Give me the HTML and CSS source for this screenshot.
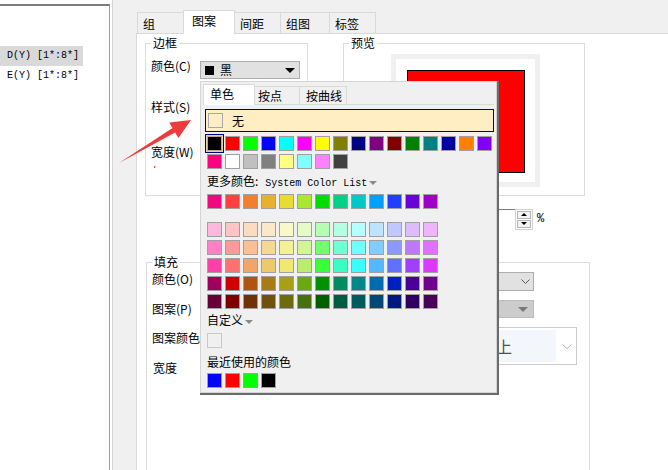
FILE: index.html
```html
<!DOCTYPE html>
<html lang="zh">
<head>
<meta charset="utf-8">
<link rel="stylesheet" href="styles.css">
</head>
<body>
<div class="app">
  <aside class="left">
    <div class="list">
      <div class="item sel">D(Y) [1*:8*]</div>
      <div class="item">E(Y) [1*:8*]</div>
    </div>
  </aside>
  <main class="main">
    <div class="tabs">
      <div class="tab t1">组</div>
      <div class="tab t2 active">图案</div>
      <div class="tab t3">间距</div>
      <div class="tab t4">组图</div>
      <div class="tab t5">标签</div>
    </div>
    <div class="panel">
      <div class="toprow">
        <div class="group border-group">
          <div class="legend">边框</div>
          <div class="row r1">
            <span class="lbl">颜色(C)</span>
            <div class="combo color-combo"><span class="sq"></span><span class="cname">黑</span><span class="tri"></span></div>
          </div>
          <div class="lbl-line r2">样式(S)</div>
          <div class="lbl-line r3">宽度(W)</div>
          <div class="dot"></div>
        </div>
        <div class="group preview-group">
          <div class="legend">预览</div>
          <div class="frame"><div class="redbox"></div></div>
        </div>
      </div>
      <div class="spinrow">
        <div class="spin-input"></div>
        <div class="spin-btns"><span class="sb"><span class="up"></span></span><span class="sb"><span class="down"></span></span></div>
        <span class="pct">%</span>
      </div>
      <div class="group fill-group">
        <div class="legend">填充</div>
        <div class="frow f1">
          <span class="lbl fl1">颜色(O)</span>
          <div class="combo fcombo1"><svg width="9" height="5" viewBox="0 0 9 5"><polyline points="0.5,0.5 4.5,4.5 8.5,0.5" fill="none" stroke="#555" stroke-width="1"/></svg></div>
        </div>
        <div class="frow f2">
          <span class="lbl fl2">图案(P)</span>
          <div class="combo fcombo2"><span class="gtri"></span></div>
        </div>
        <div class="frow f3">
          <div class="lblcol">
            <span class="lbl fl3">图案颜色</span>
            <span class="lbl fl4">宽度</span>
          </div>
          <div class="fcombo3">
            <div class="fc3-inner"><span class="fc3-text">向上</span></div>
            <svg width="10" height="5" viewBox="0 0 10 5"><polyline points="0.5,0.5 5,4.5 9.5,0.5" fill="none" stroke="#b0b0b0" stroke-width="1"/></svg>
          </div>
        </div>
      </div>
    </div>
  </main>
</div>

<div class="popup">
  <div class="ptabs">
    <div class="ptab p1 active">单色</div>
    <div class="ptab p2">按点</div>
    <div class="ptab p3">按曲线</div>
  </div>
  <div class="none-row"><span class="none-sq"></span><span class="none-txt">无</span></div>
  <div class="sw-grid basic">
    <span class="sw selected" style="background:#000000"></span>
    <span class="sw" style="background:#ff0000"></span>
    <span class="sw" style="background:#00ff00"></span>
    <span class="sw" style="background:#0000ff"></span>
    <span class="sw" style="background:#00ffff"></span>
    <span class="sw" style="background:#ff00ff"></span>
    <span class="sw" style="background:#ffff00"></span>
    <span class="sw" style="background:#808000"></span>
    <span class="sw" style="background:#000080"></span>
    <span class="sw" style="background:#800080"></span>
    <span class="sw" style="background:#800000"></span>
    <span class="sw" style="background:#008000"></span>
    <span class="sw" style="background:#008080"></span>
    <span class="sw" style="background:#0000a0"></span>
    <span class="sw" style="background:#ff8000"></span>
    <span class="sw" style="background:#8000ff"></span>
    <span class="sw" style="background:#ff0080"></span>
    <span class="sw" style="background:#ffffff"></span>
    <span class="sw" style="background:#c0c0c0"></span>
    <span class="sw" style="background:#808080"></span>
    <span class="sw" style="background:#ffff80"></span>
    <span class="sw" style="background:#80ffff"></span>
    <span class="sw" style="background:#ff80ff"></span>
    <span class="sw" style="background:#404040"></span>
  </div>
  <div class="ptext more-title">更多颜色:<span class="mono">System Color List</span><span class="dd"></span></div>
  <div class="sw-grid more">
    <span class="sw" style="background:#f0087e"></span>
    <span class="sw" style="background:#ff4040"></span>
    <span class="sw" style="background:#f08030"></span>
    <span class="sw" style="background:#e8b030"></span>
    <span class="sw" style="background:#e8dc30"></span>
    <span class="sw" style="background:#a8e830"></span>
    <span class="sw" style="background:#00dc00"></span>
    <span class="sw" style="background:#00d088"></span>
    <span class="sw" style="background:#00c8c8"></span>
    <span class="sw" style="background:#00a0ff"></span>
    <span class="sw" style="background:#2040ff"></span>
    <span class="sw" style="background:#6a00dc"></span>
    <span class="sw" style="background:#a000c8"></span>
  </div>
  <div class="sw-grid palette">
    <span class="sw" style="background:#ffb8dc"></span>
    <span class="sw" style="background:#ffc4c4"></span>
    <span class="sw" style="background:#fcdcc0"></span>
    <span class="sw" style="background:#fae8c8"></span>
    <span class="sw" style="background:#f8f8c8"></span>
    <span class="sw" style="background:#e4fac8"></span>
    <span class="sw" style="background:#b4ffb4"></span>
    <span class="sw" style="background:#b4ffe4"></span>
    <span class="sw" style="background:#b4ffff"></span>
    <span class="sw" style="background:#bce4ff"></span>
    <span class="sw" style="background:#c0c8ff"></span>
    <span class="sw" style="background:#dcbcff"></span>
    <span class="sw" style="background:#f0b4ff"></span>

    <span class="sw" style="background:#ff80c4"></span>
    <span class="sw" style="background:#ff9898"></span>
    <span class="sw" style="background:#f8c094"></span>
    <span class="sw" style="background:#f4d898"></span>
    <span class="sw" style="background:#f4f098"></span>
    <span class="sw" style="background:#d4f498"></span>
    <span class="sw" style="background:#70ff70"></span>
    <span class="sw" style="background:#70ffd4"></span>
    <span class="sw" style="background:#70ffff"></span>
    <span class="sw" style="background:#84ccff"></span>
    <span class="sw" style="background:#8c98ff"></span>
    <span class="sw" style="background:#bc78ff"></span>
    <span class="sw" style="background:#e070ff"></span>

    <span class="sw" style="background:#ff40a8"></span>
    <span class="sw" style="background:#ff7070"></span>
    <span class="sw" style="background:#f4a464"></span>
    <span class="sw" style="background:#eec86c"></span>
    <span class="sw" style="background:#f0e870"></span>
    <span class="sw" style="background:#bcec6c"></span>
    <span class="sw" style="background:#38ff38"></span>
    <span class="sw" style="background:#38ffc4"></span>
    <span class="sw" style="background:#38ffff"></span>
    <span class="sw" style="background:#54b8ff"></span>
    <span class="sw" style="background:#6070ff"></span>
    <span class="sw" style="background:#a040ff"></span>
    <span class="sw" style="background:#dc38ff"></span>

    <span class="sw" style="background:#a0005c"></span>
    <span class="sw" style="background:#d00000"></span>
    <span class="sw" style="background:#b05410"></span>
    <span class="sw" style="background:#a87c14"></span>
    <span class="sw" style="background:#a8a014"></span>
    <span class="sw" style="background:#6ca814"></span>
    <span class="sw" style="background:#009000"></span>
    <span class="sw" style="background:#008c60"></span>
    <span class="sw" style="background:#008888"></span>
    <span class="sw" style="background:#006cb0"></span>
    <span class="sw" style="background:#0020c0"></span>
    <span class="sw" style="background:#480098"></span>
    <span class="sw" style="background:#700090"></span>

    <span class="sw" style="background:#680038"></span>
    <span class="sw" style="background:#800000"></span>
    <span class="sw" style="background:#703008"></span>
    <span class="sw" style="background:#705010"></span>
    <span class="sw" style="background:#6c6c0c"></span>
    <span class="sw" style="background:#487010"></span>
    <span class="sw" style="background:#006000"></span>
    <span class="sw" style="background:#005c40"></span>
    <span class="sw" style="background:#005c5c"></span>
    <span class="sw" style="background:#004878"></span>
    <span class="sw" style="background:#001880"></span>
    <span class="sw" style="background:#300060"></span>
    <span class="sw" style="background:#480058"></span>
  </div>
  <div class="ptext custom-title">自定义<span class="dd"></span></div>
  <div class="custom-sw"></div>
  <div class="ptext recent-title">最近使用的颜色</div>
  <div class="sw-grid recent">
    <span class="sw" style="background:#0000ff"></span>
    <span class="sw" style="background:#ff0000"></span>
    <span class="sw" style="background:#00ff00"></span>
    <span class="sw" style="background:#000000"></span>
  </div>
</div>

<svg class="arrow" width="668" height="470" viewBox="0 0 668 470">
  <polygon points="119,163 175.1,132.5 178.4,138 191,120 169.2,122.6 172.5,128.1" fill="#ee3b3b"/>
</svg>
</body>
</html>
```

FILE: styles.css
```css
html, body {
  margin: 0;
  padding: 0;
}

body {
  width: 668px;
  height: 470px;
  overflow: hidden;
  position: relative;
  background: #f0f0f0;
  color: #000;
  font-family: "Noto Sans CJK SC", "Liberation Sans", sans-serif;
  font-size: 12px;
  line-height: 14px;
}

.app {
  display: flex;
  height: 470px;
  overflow: hidden;
}

/* ---------- left list ---------- */
.left {
  flex: none;
  width: 113px;
  box-sizing: border-box;
  background: #fff;
  border-right: 1px solid #d4d4d4;
  padding-top: 4px;
}

.list {
  width: 110px;
  height: 100%;
  box-sizing: border-box;
  border-top: 2px solid #7d7d7d;
  border-right: 1px solid #a0a0a0;
  padding-top: 40px;
}

.item {
  width: 83px;
  height: 20px;
  line-height: 20px;
  box-sizing: border-box;
  padding-left: 7px;
  font-family: "Liberation Mono", monospace;
  font-size: 10px;
  white-space: pre;
}

.item.sel {
  background: #d9d9d9;
}

/* ---------- tab control ---------- */
.main {
  flex: 1;
  min-width: 0;
  display: flex;
  flex-direction: column;
  padding-left: 23px;
  overflow: hidden;
}

.tabs {
  flex: none;
  height: 33px;
  display: flex;
  align-items: flex-end;
  padding-left: 1px;
}

.tab {
  height: 21px;
  box-sizing: border-box;
  border: 1px solid #d9d9d9;
  border-bottom: none;
  background: #f0f0f0;
  padding: 4px 0 0 5px;
  margin-left: -1px;
}

.tab.t1 { width: 47px; margin-left: 0; }
.tab.t2 { width: 52px; }
.tab.t3 { width: 47px; }
.tab.t4 { width: 50px; }
.tab.t5 { width: 47px; }

.tab.active {
  position: relative;
  z-index: 1;
  height: 24px;
  margin-bottom: -1px;
  background: #fff;
  padding: 3px 0 0 8px;
}

.panel {
  flex: 1;
  min-height: 0;
  background: #fff;
  border-top: 1px solid #d9d9d9;
  border-left: 1px solid #d9d9d9;
  padding: 9px 0 0 8px;
}

/* ---------- group boxes ---------- */
.group {
  border: 1px solid #dcdcdc;
  box-sizing: border-box;
}

.legend {
  margin: -8px 0 0 5px;
  padding: 0 2px;
  width: max-content;
  height: 14px;
  line-height: 14px;
  background: #fff;
}

.toprow {
  display: flex;
  gap: 35px;
}

.border-group {
  width: 163px;
  height: 153px;
}

.row {
  display: flex;
  align-items: flex-start;
}

.lbl {
  display: block;
  line-height: 12px;
  white-space: nowrap;
}

.r1 {
  margin-top: 10px;
  padding-left: 5px;
}

.r1 .lbl {
  width: 49px;
}

.lbl-line {
  line-height: 12px;
  padding-left: 5px;
}

.r2 { margin-top: 22px; }
.r3 { margin-top: 33px; }

.dot {
  width: 1px;
  height: 2px;
  margin: 8px 0 0 8px;
  background: #ff3b3b;
}

.combo {
  box-sizing: border-box;
  display: flex;
  align-items: center;
  border: 1px solid #adadad;
  background: #e1e1e1;
}

.color-combo {
  width: 100px;
  height: 18px;
  margin-top: 1px;
  padding: 0 4px;
}

.sq {
  width: 9px;
  height: 9px;
  background: #000;
  margin-right: 6px;
}

.cname {
  line-height: 12px;
}

.tri {
  margin-left: auto;
  width: 0;
  height: 0;
  border-left: 5px solid transparent;
  border-right: 5px solid transparent;
  border-top: 5px solid #000;
}

/* preview */
.preview-group {
  width: 242px;
  height: 153px;
}

.frame {
  margin: 4px 0 0 47px;
  width: 149px;
  height: 133px;
  box-sizing: border-box;
  border: 5px solid #f0f0f0;
  background: #fff;
  padding: 11px 10px 9px 11px;
}

.redbox {
  width: 118px;
  height: 103px;
  box-sizing: border-box;
  border: 1px solid #000;
  background: #ff0000;
}

/* spinner */
.spinrow {
  display: flex;
  align-items: center;
  margin-top: 13px;
  padding-left: 300px;
  height: 20px;
}

.spin-input {
  width: 70px;
  height: 20px;
  box-sizing: border-box;
  border-top: 1px solid #7a7a7a;
  border-left: 1px solid #7a7a7a;
  background: #fff;
}

.spin-btns {
  width: 18px;
  height: 21px;
  box-sizing: border-box;
  border: 1px solid #d0d0d0;
  padding: 1px;
  display: flex;
  flex-direction: column;
  gap: 1px;
}

.sb {
  flex: 1;
  border: 1px solid #b4b4b4;
  background: #f4f4f4;
  display: flex;
  align-items: center;
  justify-content: center;
}

.up {
  width: 0;
  height: 0;
  border-left: 3px solid transparent;
  border-right: 3px solid transparent;
  border-bottom: 3px solid #000;
}

.down {
  width: 0;
  height: 0;
  border-left: 3px solid transparent;
  border-right: 3px solid transparent;
  border-top: 3px solid #000;
}

.pct {
  margin-left: 4px;
  font-family: "Liberation Mono", monospace;
  font-size: 12px;
}

/* fill group */
.fill-group {
  margin: 33px 0 0 1px;
  width: 444px;
  height: 208px;
  border-bottom: none;
}

.frow {
  display: flex;
  align-items: flex-start;
  padding-left: 5px;
}

.frow > .lbl,
.lblcol {
  width: 58px;
  flex: none;
}

.f1 { margin-top: 3px; }
.f2 { margin-top: 9px; }
.f3 { margin-top: 9px; }

.fl1 { margin-top: 1px; }
.fl2 { margin-top: 3px; }
.fl3 { margin-top: 5px; }
.fl4 { margin-top: 18px; padding-left: 1px; }

.fcombo1 {
  width: 324px;
  height: 19px;
  justify-content: flex-end;
  padding-right: 3px;
}

.fcombo2 {
  width: 324px;
  height: 18px;
  justify-content: flex-end;
  padding-right: 5px;
  background: #cccccc;
  border-color: #bcbcbc;
}

.gtri {
  width: 0;
  height: 0;
  border-left: 5px solid transparent;
  border-right: 5px solid transparent;
  border-top: 5px solid #7a7a7a;
}

.fcombo3 {
  width: 367px;
  height: 38px;
  box-sizing: border-box;
  border: 1px solid #cccccc;
  background: #fff;
  display: flex;
  align-items: center;
  padding: 2px 4px 2px 2px;
  gap: 6px;
}

.fc3-inner {
  flex: 1;
  height: 100%;
  background: #f3f7fb;
  display: flex;
  align-items: center;
  justify-content: flex-end;
  padding-right: 44px;
}

.fc3-text {
  font-size: 16px;
  line-height: 18px;
  color: #505050;
}

/* ---------- popup ---------- */
.popup {
  position: absolute;
  left: 200px;
  top: 81px;
  width: 297px;
  height: 312px;
  box-sizing: border-box;
  background: #f0f0f0;
  border: 1px solid #d4d4d4;
  box-shadow: 2px 0 0 #6b6b6b, 0 2px 0 #6b6b6b, 2px 2px 0 #6b6b6b;
  overflow: hidden;
  z-index: 5;
}

.ptabs {
  margin: 2px 2px 0 2px;
  height: 21px;
  box-sizing: border-box;
  border-bottom: 1px solid #d9d9d9;
  display: flex;
  align-items: flex-end;
}

.ptab {
  height: 18px;
  box-sizing: border-box;
  border: 1px solid #d9d9d9;
  border-bottom: none;
  margin-left: -1px;
  padding: 2px 0 0 5px;
  background: #f0f0f0;
}

.ptab.p1 { width: 52px; margin-left: 0; }
.ptab.p2 { width: 46px; padding-left: 3px; }
.ptab.p3 { width: 48px; padding-left: 6px; }

.ptab.active {
  position: relative;
  height: 21px;
  margin-bottom: -1px;
  background: #fff;
  padding: 2px 0 0 6px;
}

.none-row {
  margin: 4px 2px 0 4px;
  height: 23px;
  box-sizing: border-box;
  border: 1px solid #000080;
  background: #ffedc4;
  display: flex;
  align-items: center;
  padding-left: 2px;
}

.none-sq {
  width: 15px;
  height: 15px;
  box-sizing: border-box;
  border: 1px solid #a8a8a8;
}

.none-txt {
  margin-left: 9px;
}

.sw-grid {
  display: grid;
  grid-template-columns: repeat(16, 15px);
  grid-auto-rows: 15px;
  gap: 3px;
  margin-left: 6px;
}

.sw {
  display: block;
  box-sizing: border-box;
  border: 1px solid #a0a0a0;
}

.sw.selected {
  border-color: #c8a878;
  box-shadow: 0 0 0 1px #e8d0a8, 0 0 0 2px #000080;
}

.basic { margin-top: 4px; }
.more { margin-top: 6px; }
.palette { margin-top: 13px; grid-template-columns: repeat(13, 15px); }
.recent { margin-top: 4px; }

.ptext {
  margin-left: 6px;
  height: 14px;
  line-height: 14px;
  white-space: nowrap;
}

.more-title { margin-top: 5px; }
.custom-title { margin-top: 4px; }
.recent-title { margin-top: 7px; }

.mono {
  font-family: "Liberation Mono", monospace;
  font-size: 10px;
  margin-left: 7px;
}

.dd {
  display: inline-block;
  vertical-align: middle;
  width: 0;
  height: 0;
  margin-left: 2px;
  border-left: 4px solid transparent;
  border-right: 4px solid transparent;
  border-top: 4px solid #8a8a8a;
}

.custom-sw {
  margin: 6px 0 0 6px;
  width: 15px;
  height: 15px;
  box-sizing: border-box;
  border: 1px solid #c8c8c8;
  background: #f0f0f0;
}

/* ---------- annotation arrow ---------- */
.arrow {
  position: absolute;
  left: 0;
  top: 0;
  pointer-events: none;
  z-index: 6;
}
```
